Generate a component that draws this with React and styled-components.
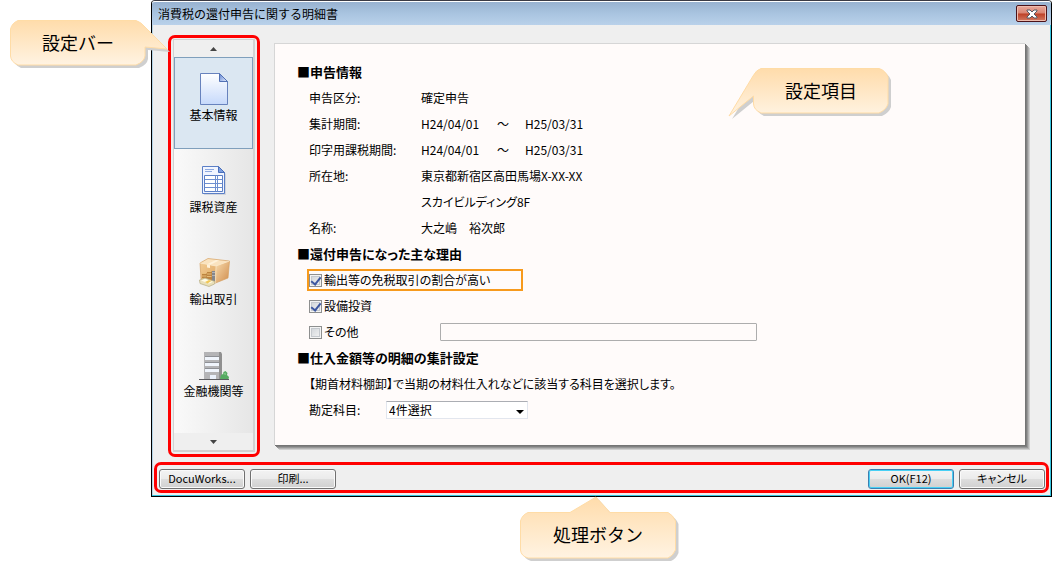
import React from "react";
import styled, { createGlobalStyle } from "styled-components";

const GlobalStyle = createGlobalStyle`
  * { box-sizing: border-box; }
  body {
    margin: 0;
    background: #fff;
    color: #000;
    font-family: "Noto Sans CJK JP", "Liberation Sans", sans-serif;
    font-size: 12px;
    line-height: 16px;
  }
  button, input, select { font: inherit; color: inherit; }
`;

const Page = styled.main`
  display: grid;
  grid-template-columns: 151px minmax(0, 1fr);
`;

/* ---------- callouts ---------- */

const CalloutBox = styled.div`
  position: relative;
  z-index: 2;
  display: flex;
  align-items: center;
  justify-content: center;
  width: ${(p) => p.$width}px;
  height: 47px;
  padding-bottom: 4px;
  font-size: 18px;
  line-height: 24px;

  svg {
    position: absolute;
    inset: 0;
    overflow: visible;
    z-index: -1;
  }
`;

const SideNote = styled.div`
  padding: 20px 0 0 10px;
`;

const PanelNote = styled.div`
  position: absolute;
  top: 24px;
  right: 136px;
`;

const BottomNote = styled.div`
  grid-column: 1 / -1;
  padding: 15px 0 12px 520px;
`;

function Callout({ width, shape, name, children }) {
  return (
    <CalloutBox $width={width}>
      <svg width={width} height="47" aria-hidden="true">
        <defs>
          <linearGradient id={name} x1="0" y1="0" x2="0" y2="1">
            <stop offset="0" stopColor="#ffdcab" />
            <stop offset="1" stopColor="#fff3e2" />
          </linearGradient>
        </defs>
        <path d={shape} fill="#cfcfcf" transform="translate(3 3)" />
        <path d={shape} fill={`url(#${name})`} stroke="#ffdca6" />
      </svg>
      <span>{children}</span>
    </CalloutBox>
  );
}

/* ---------- dialog frame ---------- */

const Dialog = styled.section`
  display: flex;
  flex-direction: column;
  border: 1px solid #000;
  border-top-color: #3a3a44;
  border-radius: 4px 4px 0 0;
  background: #efefef;
  box-shadow: inset -1px -1px #35c5e0, inset 1px 0 #b4d4e6;
`;

const TitleBar = styled.header`
  display: flex;
  align-items: center;
  justify-content: space-between;
  height: 24px;
  padding: 0 4px 0 6px;
  border-top: 1px solid #fff;
  border-radius: 3px 3px 0 0;
  background: linear-gradient(#98b2d0, #a9c4e0 50%, #b9d1ea);
`;

const Title = styled.h1`
  margin: 0;
  font-size: 12px;
  font-weight: 400;
`;

const CloseButton = styled.button`
  display: grid;
  place-items: center;
  width: 31px;
  height: 17px;
  padding: 0;
  border: 1px solid #4b1219;
  border-radius: 2px;
  background: linear-gradient(#e9a99c, #d98472 48%, #bd4027 52%, #d27a62);
  box-shadow: inset 0 0 0 1px #eebcae;
`;

const Body = styled.div`
  display: flex;
  align-items: flex-start;
  gap: 14px;
  padding: 10px 26px 5px 16px;
`;

/* ---------- settings bar ---------- */

const SideFrame = styled.div`
  flex: none;
  width: 92px;
  padding: 1px 2px 2px;
  border: 3px solid #f00;
  border-radius: 7px;
`;

const SideBar = styled.nav`
  display: flex;
  flex-direction: column;
  border: 1px solid #d2d2d2;
  border-width: 1px 2px 2px 1px;
  background: linear-gradient(90deg, #fafafa, #e6e6e6);
`;

const ScrollButton = styled.button`
  display: grid;
  place-items: center;
  height: 17px;
  padding: 0;
  border: 0;
  background: #efefef;
`;

const SideItem = styled.button`
  display: flex;
  flex-direction: column;
  align-items: center;
  height: 92px;
  padding: 13px 0 0;
  border: 1px solid ${(p) => (p.$active ? "#7f9fbc" : "transparent")};
  background: ${(p) => (p.$active ? "#dbe7f2" : "transparent")};
  white-space: nowrap;
`;

const SideSpace = styled.div`
  height: 8px;
`;

/* ---------- content panel ---------- */

const Panel = styled.div`
  position: relative;
  flex: 1;
  min-width: 0;
  margin-top: 8px;
  padding: 15px 22px 22px;
  border: 1px solid #d6d6d6;
  border-width: 1px 0 0 1px;
  background: #fffbfa;
  font-feature-settings: "palt";
  box-shadow: 1px 1px #747474, 2px 2px #808080, 3px 3px #989898,
    4px 4px #b4b4b4, 5px 5px #cfcfcf;
`;

const Heading = styled.h2`
  margin: 0;
  font-size: 13px;
  font-weight: 700;
  line-height: 26px;
`;

const Details = styled.dl`
  display: grid;
  grid-template-columns: 112px minmax(0, 1fr);
  margin: 0 0 0 12px;
  line-height: 26px;

  dt, dd { margin: 0; }
  dd { grid-column: 2; }
`;

const Period = styled.span`
  display: inline-grid;
  grid-template-columns: 76px 28px auto;
`;

const Row = styled.div`
  display: grid;
  grid-template-columns: ${(p) => p.$columns || "auto"};
  align-items: center;
  height: 26px;
  margin-left: 12px;
`;

const CheckLabel = styled.label`
  display: flex;
  align-items: center;
  gap: 2px;
  width: ${(p) => (p.$focused ? "216px" : "auto")};
  height: 22px;
  margin-left: -2px;
  border: 2px solid ${(p) => (p.$focused ? "#f79a1c" : "transparent")};
`;

const CheckBox = styled.input.attrs({ type: "checkbox" })`
  appearance: none;
  display: grid;
  place-items: center;
  flex: none;
  width: 13px;
  height: 13px;
  margin: 0;
  border: 1px solid #8e8f8f;
  background: linear-gradient(135deg, #cdd1d6, #f6f6f6);
  box-shadow: inset 0 0 0 1px #f4f4f4, inset 0 0 0 2px #c5c9ce;

  &:checked::after {
    content: "";
    width: 4px;
    height: 8px;
    margin-bottom: 2px;
    border: solid #3d57a0;
    border-width: 0 2px 2px 0;
    transform: rotate(38deg);
  }
`;

const TextBox = styled.input.attrs({ type: "text" })`
  width: 100%;
  height: 18px;
  padding: 0 4px;
  border: 1px solid #adadad;
  border-radius: 1px;
  background: #fffbfa;
`;

const SelectWrap = styled.div`
  display: grid;
  align-items: center;

  > * { grid-area: 1 / 1; }
  > svg {
    justify-self: end;
    margin: 3px 4px 0 0;
    pointer-events: none;
  }
`;

const Select = styled.select`
  appearance: none;
  width: 100%;
  height: 18px;
  padding: 0 18px 0 2px;
  border: 1px solid #e2e6ee;
  border-top-color: #abadb3;
  border-radius: 0;
  background: #fff;
  line-height: 16px;
`;

/* ---------- footer ---------- */

const Footer = styled.footer`
  display: flex;
  justify-content: space-between;
  margin: 0 2px 3px;
  padding: 4px 1px 1px 2px;
  border: 3px solid #f00;
  border-radius: 7px;
`;

const ButtonGroup = styled.div`
  display: flex;
  gap: 5px;
`;

const PushButton = styled.button`
  width: 86px;
  height: 20px;
  padding: 0 0 2px;
  border: 1px solid ${(p) => (p.$primary ? "#3c7fb1" : "#707070")};
  border-radius: 3px;
  background: linear-gradient(#f3f3f3, #ebebeb 48%, #dddddd 52%, #d0d0d0);
  box-shadow: inset 0 0 0 1px ${(p) => (p.$primary ? "#48d0f5" : "#fafafa")};
  font-size: 11px;
  line-height: 16px;
  font-feature-settings: "palt";
`;

/* ---------- icons ---------- */

const PageIcon = () => (
  <svg width="30" height="36" viewBox="0 0 30 36" aria-hidden="true">
    <defs>
      <linearGradient id="pageFill" x1="0" y1="0" x2="0" y2="1">
        <stop offset="0" stopColor="#fff" />
        <stop offset="1" stopColor="#c6d9fb" />
      </linearGradient>
      <linearGradient id="pageFold" x1="0" y1="0" x2="1" y2="1">
        <stop offset="0" stopColor="#5d82d0" />
        <stop offset="1" stopColor="#e8f0ff" />
      </linearGradient>
    </defs>
    <path d="M1.500 2.500H20.500L28.500 10.500V33.500H1.500Z" fill="url(#pageFill)" stroke="#6782bd" />
    <path d="M20.500 2.500V10.500H28.500Z" fill="url(#pageFold)" stroke="#5271b5" />
  </svg>
);

const SheetIcon = () => (
  <svg width="30" height="36" viewBox="0 0 30 36" aria-hidden="true">
    <path d="M5 5H21L27 11V32H5Z" fill="#d3d6dc" />
    <path d="M3.500 3.500H19.500L25.500 9.500V30.500H3.500Z" fill="#f1f5ff" stroke="#5b7fc6" />
    <path d="M19.500 3.500V9.500H25.500Z" fill="#7b9ee0" stroke="#4a6fba" />
    <path d="M6 6.500H15M6 8.500H13" stroke="#8da9df" />
    <path d="M5.500 12.500H23.500V28.500H5.500Z" fill="#fff" stroke="#5b7fc6" />
    <path d="M5.500 16.500H23.500M5.500 20.500H23.500M5.500 24.500H23.500M16.500 12.500V28.500M18.500 12.500V28.500" stroke="#6e8fd0" />
  </svg>
);

const BoxIcon = () => (
  <svg width="34" height="36" viewBox="0 0 34 36" aria-hidden="true">
    <defs>
      <linearGradient id="boxFront" x1="0" y1="0" x2="1" y2="1">
        <stop offset="0" stopColor="#f2cb92" />
        <stop offset="1" stopColor="#e0a865" />
      </linearGradient>
      <linearGradient id="boxSide" x1="0" y1="0" x2="1" y2="1">
        <stop offset="0" stopColor="#f8dcae" />
        <stop offset="1" stopColor="#d08c4c" />
      </linearGradient>
    </defs>
    <path d="M3 8L19 11L18.500 28L4 24Z" fill="url(#boxFront)" />
    <path d="M19 11L32.500 6L31 23L18.500 28Z" fill="url(#boxSide)" />
    <path d="M3 8L11 3.500L32.500 6L19 11Z" fill="#fae3bf" />
    <path d="M10 9.300L20 4.500L23 5L13 9.900V13L10 12.500Z" fill="#fff2da" />
    <path d="M3 8L11 3.500L32.500 6L31 23L18.500 28L4 24Z" fill="none" stroke="#d5a062" strokeWidth=".7" />
    <path d="M3 8L19 11L32.500 6M19 11L18.500 28" fill="none" stroke="#fbe6c4" strokeWidth=".7" />
    <path d="M5 18h5v8h-5zM10 16h5v10h-5z" fill="#bd8440" />
    <path d="M5 18.500h4.500M5 21h4.500M5 23.500h4.500M10 16.500h4.500M10 19h4.500M10 21.500h4.500" stroke="#e6bd78" />
    <path d="M15 16h3v10h-3z" fill="#85878c" />
    <path d="M15 17.500h3M15 20.500h3" stroke="#b3b4b8" />
    <path d="M2.500 25L8 23L18 26.500L17.500 29L12 31.500L3 28.500Z" fill="#e9dfb8" stroke="#b5aa80" strokeWidth=".7" />
    <path d="M4 25.500L8 24L16 26.700L12 28.500Z" fill="#fffbe8" />
    <path d="M8 27L12 25L14.500 26L10.500 28.500Z" fill="#f0c858" />
  </svg>
);

const BuildingIcon = () => (
  <svg width="32" height="36" viewBox="0 0 32 36" aria-hidden="true">
    <path d="M8 5H23L24 7V32H8Z" fill="#909090" />
    <path d="M6 5H21V32H6Z" fill="#b4b4b6" />
    <path d="M7 10H21V13H7ZM7 16H21V19H7ZM7 22H21V25H7Z" fill="#f0f5fc" />
    <path d="M7 9.500H21M7 15.500H21M7 21.500H21" stroke="#8e9095" />
    <path d="M12 28H18V32H12Z" fill="#eaf1fb" />
    <path d="M22 32L23 28L25 27L25.500 25L27.500 24L29.500 26L29 28L31 30L30.500 32Z" fill="#56ab62" />
    <path d="M25 27L27.500 25.500L28 28Z" fill="#86c98b" />
    <path d="M1 32.500H31" stroke="#5b5b5e" />
  </svg>
);

const Triangle = ({ down, width = 7, color = "#444" }) => (
  <svg width={width} height="4" viewBox="0 0 8 4" preserveAspectRatio="none" aria-hidden="true">
    <path d={down ? "M0 0H8L4 4Z" : "M0 4H8L4 0Z"} fill={color} />
  </svg>
);

const CloseIcon = () => (
  <svg width="12" height="10" viewBox="0 0 12 10" aria-hidden="true">
    <path d="M1 1H4L6 3L8 1H11V2L8 5L11 8V9H8L6 7L4 9H1V8L4 5L1 2Z" fill="#fff" stroke="#555a66" />
  </svg>
);

const sideItems = [
  { label: "基本情報", Icon: PageIcon, active: true },
  { label: "課税資産", Icon: SheetIcon },
  { label: "輸出取引", Icon: BoxIcon },
  { label: "金融機関等", Icon: BuildingIcon },
];

const PeriodValue = () => (
  <Period>
    <span>H24/04/01</span>
    <span>～</span>
    <span>H25/03/31</span>
  </Period>
);

export default function App() {
  return (
    <>
      <GlobalStyle />
      <Page>
        <SideNote>
          <Callout
            name="sideNote"
            width={136}
            shape="M8 .5H126Q131 2 135 7L157 29L135 27V36Q134 42 126 45H8Q1 42 .5 36V9Q2 3 8 .5Z"
          >
            設定バー
          </Callout>
        </SideNote>

        <Dialog aria-label="消費税の還付申告に関する明細書">
          <TitleBar>
            <Title>消費税の還付申告に関する明細書</Title>
            <CloseButton aria-label="閉じる"><CloseIcon /></CloseButton>
          </TitleBar>

          <Body>
            <SideFrame>
              <SideBar>
                <ScrollButton aria-label="上へ"><Triangle /></ScrollButton>
                {sideItems.map(({ label, Icon, active }) => (
                  <SideItem key={label} $active={active}>
                    <Icon />
                    <span>{label}</span>
                  </SideItem>
                ))}
                <SideSpace />
                <ScrollButton aria-label="下へ"><Triangle down /></ScrollButton>
              </SideBar>
            </SideFrame>

            <Panel>
              <Heading>■申告情報</Heading>
              <Details>
                <dt>申告区分:</dt>
                <dd>確定申告</dd>
                <dt>集計期間:</dt>
                <dd><PeriodValue /></dd>
                <dt>印字用課税期間:</dt>
                <dd><PeriodValue /></dd>
                <dt>所在地:</dt>
                <dd>東京都新宿区高田馬場X-XX-XX</dd>
                <dd>スカイビルディング8F</dd>
                <dt>名称:</dt>
                <dd>大之嶋　裕次郎</dd>
              </Details>

              <Heading>■還付申告になった主な理由</Heading>
              <Row>
                <CheckLabel $focused>
                  <CheckBox defaultChecked />
                  輸出等の免税取引の割合が高い
                </CheckLabel>
              </Row>
              <Row>
                <CheckLabel>
                  <CheckBox defaultChecked />
                  設備投資
                </CheckLabel>
              </Row>
              <Row $columns="131px minmax(0, 317px)">
                <CheckLabel>
                  <CheckBox />
                  その他
                </CheckLabel>
                <TextBox aria-label="その他の理由" />
              </Row>

              <Heading>■仕入金額等の明細の集計設定</Heading>
              <Row>【期首材料棚卸】で当期の材料仕入れなどに該当する科目を選択します。</Row>
              <Row $columns="77px minmax(0, 142px)">
                <label htmlFor="account">勘定科目:</label>
                <SelectWrap>
                  <Select id="account">
                    <option>4件選択</option>
                  </Select>
                  <Triangle down width={8} color="#000" />
                </SelectWrap>
              </Row>

              <PanelNote>
                <Callout
                  name="panelNote"
                  width={136}
                  shape="M8 .5H126Q132 2 135 9V36Q133 42 126 45H8Q1 42 .5 36V28L-24 48L0 8Q3 2 8 .5Z"
                >
                  設定項目
                </Callout>
              </PanelNote>
            </Panel>
          </Body>

          <Footer>
            <ButtonGroup>
              <PushButton>DocuWorks...</PushButton>
              <PushButton>印刷...</PushButton>
            </ButtonGroup>
            <ButtonGroup>
              <PushButton $primary>OK(F12)</PushButton>
              <PushButton>キャンセル</PushButton>
            </ButtonGroup>
          </Footer>
        </Dialog>

        <BottomNote>
          <Callout
            name="bottomNote"
            width={156}
            shape="M8 .5H50L76 -15L90 .5H148Q153 3 155.5 9V38Q153 44 148 46H8Q1 44 .5 38V9Q2 3 8 .5Z"
          >
            処理ボタン
          </Callout>
        </BottomNote>
      </Page>
    </>
  );
}
